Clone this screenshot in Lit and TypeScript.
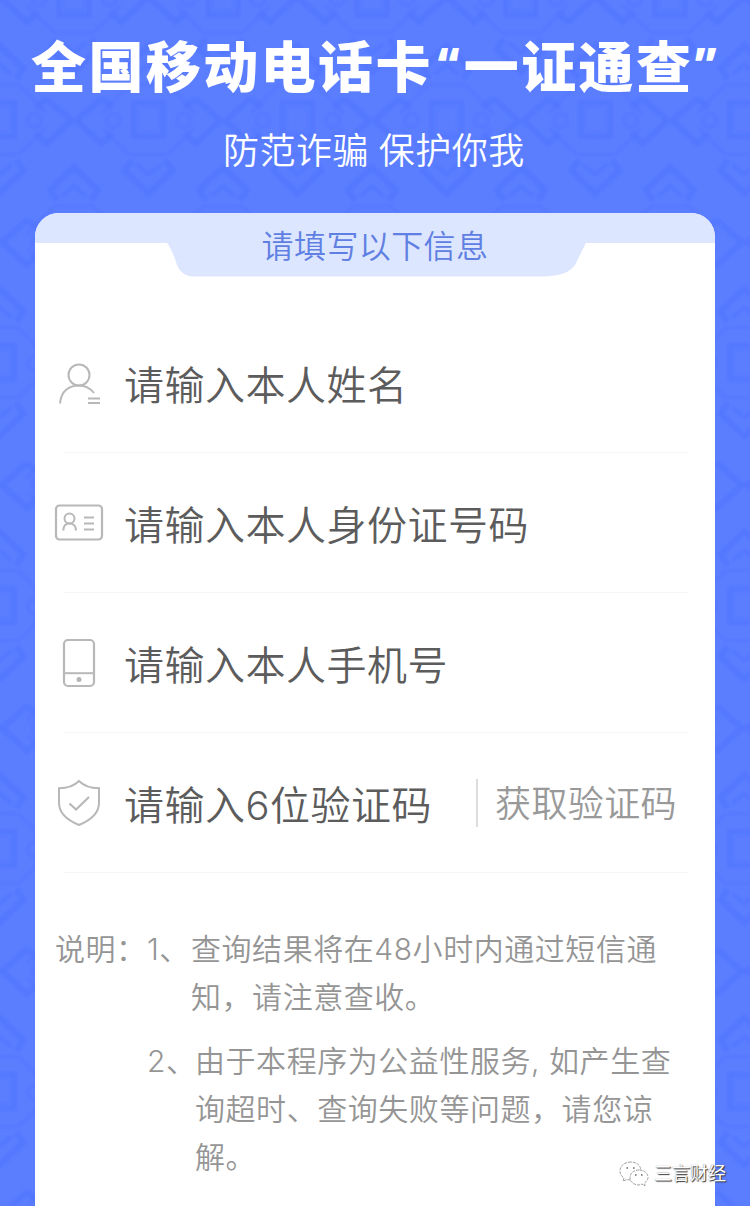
import { LitElement, html, css, svg, unsafeCSS } from "lit";
import { customElement } from "lit/decorators.js";

const motif = (x: number, y: number) => `<g transform="translate(${x} ${y})">
<rect x="-15" y="-17" width="30" height="34" stroke-width="5"/>
<rect x="-10" y="-12" width="20" height="24" stroke-width="1.5" stroke-opacity=".4"/>
<path d="M-19 -35L-47 -6M-19 35L-47 8M19 -35L47 -6M19 35L47 8M-19 35H19M-19 -35H19" stroke-width="4" stroke-opacity=".4"/>
<path d="M-47 -21L-72 1L-47 24L-36 14M-47 -21L-36 -12M47 -21L72 1L47 24L36 14M47 -21L36 -12" stroke-width="6"/>
<path d="M-17 41L-24 51L0 74L24 51L17 41M-17 -41L-24 -51L0 -74L24 -51L17 -41" stroke-width="6"/>
<path d="M-12 45L0 55L12 45M-12 -45L0 -55L12 -45" stroke-width="4"/>
<circle cx="-35" cy="1" r="7" stroke-width="4" stroke-opacity=".4"/><circle cx="35" cy="1" r="7" stroke-width="4" stroke-opacity=".4"/>
</g>`;
const tile = `<svg xmlns="http://www.w3.org/2000/svg" width="149" height="243"><filter id="s" x="-20%" y="-20%" width="140%" height="140%"><feGaussianBlur stdDeviation="1.4"/></filter><g fill="none" stroke="#5073fe" stroke-opacity=".65" filter="url(#s)">${motif(74.5, 121.5)}${motif(0, 0)}${motif(149, 0)}${motif(0, 243)}${motif(149, 243)}</g></svg>`;
const tileUrl = unsafeCSS(`url("data:image/svg+xml,${encodeURIComponent(tile)}")`);

const icons = {
  user: svg`<circle cx="25" cy="17" r="10.500"/><path d="M6 45.500C7 33 15 27.500 25 27.500C31 27.500 36 30 40 35M34 40.500H46M34 45H46"/>`,
  card: svg`<rect x="2" y="7.500" width="46" height="34" rx="3.500" stroke-width="2.200"/><circle cx="15.500" cy="20.500" r="5"/><path d="M9.300 32.500C9.300 28 12 25.500 15.500 25.500C19 25.500 22 28 22 32.500M30 19.500H40M30 25.500H40M30 31.500H40" stroke-width="2.200"/>`,
  phone: svg`<rect x="10" y="2" width="30" height="46" rx="4" stroke-width="2.200"/><path d="M10 35.200H40"/><circle cx="25" cy="41.500" r="2.500" fill="#b5b5b5" stroke="none"/>`,
  shield: svg`<path d="M25 3C20 8 12 10.300 5 10.300V25C5 35 13 42 25 47C37 42 45 35 45 25V10.300C38 10.300 30 8 25 3Z" stroke-width="2"/><path d="M15.500 25.500L22 31.500L35 19" stroke-width="2.200"/>`,
};

@customElement("app-root")
export class AppRoot extends LitElement {
  static styles = css`
    :host {
      display: flex; flex-direction: column; position: relative;
      height: 1206px; overflow: hidden; box-sizing: border-box;
      background: #5b7eff ${tileUrl} 73.5px -2.5px;
      font-family: Inter, "Noto Sans CJK SC", sans-serif;
      white-space: nowrap;
    }
    .head { height: 213px; flex: none; color: #fff; }
    .title {
      margin: 0; padding: 32px 0 0 31px; height: 62px; display: flex;
      font: 900 55px/62px "Noto Sans CJK SC", sans-serif; letter-spacing: 2.4px;
    }
    .quote { width: 31px; padding: 0 0 0 5px; box-sizing: border-box; font-family: "Noto Sans", sans-serif; font-size: 44px; letter-spacing: 0; }
    .close { padding-left: 1px; }
    .sub { padding: 30px 0 0 223px; font-size: 36px; font-weight: 350; line-height: 54px; letter-spacing: 0.5px; word-spacing: -1px; }
    .card {
      flex: 1; margin: 0 35px; background: #fff; border-radius: 24px 24px 0 0; overflow: hidden;
    }
    .tab { display: grid; height: 64px; }
    .tab > * { grid-area: 1 / 1; }
    .label { text-align: center; font-size: 32px; font-weight: 350; line-height: 68px; letter-spacing: 0.4px; color: #5f80e2; }
    .form { padding-top: 36px; }
    .row { height: 140px; display: flex; align-items: center; margin: 0 26px 0 29px; box-sizing: border-box; background: linear-gradient(#f5f5f5, #f5f5f5) 0 100% / 100% 1px no-repeat; }
    .icon { width: 50px; height: 50px; flex: none; margin-left: -10px; fill: none; stroke: #b8b8b8; stroke-width: 2; }
    .field { margin: 6px 0 0 20px; font-size: 40px; font-weight: 350; line-height: 60px; letter-spacing: 0.5px; color: #5c5c5c; width: 352px; }
    .wide { width: auto; }
    .code { border-left: 2px solid #ddd; height: 48px; line-height: 50px; padding-left: 17px; font-size: 36px; font-weight: 350; letter-spacing: 0.4px; color: #999; }
    .notes { display: flex; margin: 52px 0 0 20px; font-size: 30px; line-height: 48px; letter-spacing: 0.55px; color: #959595; font-weight: 350; }
    .lead { width: 92px; }
    .list { display: flex; flex-direction: column; gap: 16px; }
    .note { display: flex; }
    .num { width: 44px; }
    .num2 { width: 48px; }
    .mark { position: absolute; left: 619px; top: 1160px; display: flex; align-items: center; gap: 5px; color: #fff; font-size: 18px; line-height: 28px; text-shadow: 1px 1px 1px #333, 0 0 1px #666; }
    .wechat { width: 30px; height: 26px; fill: #fff; stroke: #888; stroke-width: 0.8; stroke-dasharray: 3 1; }
  `;

  private row(icon: unknown, text: string, action = "") {
    return html`<div class="row">
      <svg class="icon" viewBox="0 0 50 50">${icon}</svg>
      <div class="field ${action ? "" : "wide"}">${text}</div>
      ${action ? html`<div class="code">${action}</div>` : ""}
    </div>`;
  }

  render() {
    return html`
      <div class="head">
        <h1 class="title"><span>全国移动电话卡</span><span class="quote">“</span><span>一证通查</span><span class="quote close">”</span></h1>
        <div class="sub">防范诈骗 保护你我</div>
      </div>
      <div class="card">
        <div class="tab">
          <svg width="680" height="64" viewBox="0 0 680 64"><path d="M0 0H680V30H551C546 40 543 46 540 52C534 60 526 63 506 63.500H158C150 63 145 59 142 52C140 45 136 35 132 30H0Z" fill="#dde6ff"/></svg>
          <div class="label">请填写以下信息</div>
        </div>
        <div class="form">
          ${this.row(icons.user, "请输入本人姓名")}
          ${this.row(icons.card, "请输入本人身份证号码")}
          ${this.row(icons.phone, "请输入本人手机号")}
          ${this.row(icons.shield, "请输入6位验证码", "获取验证码")}
        </div>
        <div class="notes">
          <div class="lead">说明：</div>
          <div class="list">
            <div class="note"><span class="num">1、</span><span>查询结果将在48小时内通过短信通<br />知，请注意查收。</span></div>
            <div class="note"><span class="num2">2、</span><span>由于本程序为公益性服务, 如产生查<br />询超时、查询失败等问题，请您谅<br />解。</span></div>
          </div>
        </div>
      </div>
      <div class="mark">
        <svg class="wechat" viewBox="0 0 30 26"><path d="M12 1C5.500 1 1 5 1 10C1 13 2.500 15.500 5 17L4 20L8 18.500C14 20 22 16 22 10C22 5 18 1 12 1Z"/><path d="M20 9C14.500 9 11 12.500 11 16.500C11 21 15 24 20 24L23 23L26 25L25.500 22C27.500 20.500 29 18.500 29 16.500C29 12 25 9 20 9Z"/><path d="M7.500 7H9M14 7H15.500M16 14H17.500M22 14H23.500" stroke-width="2"/></svg>
        <span>三言财经</span>
      </div>`;
  }
}
